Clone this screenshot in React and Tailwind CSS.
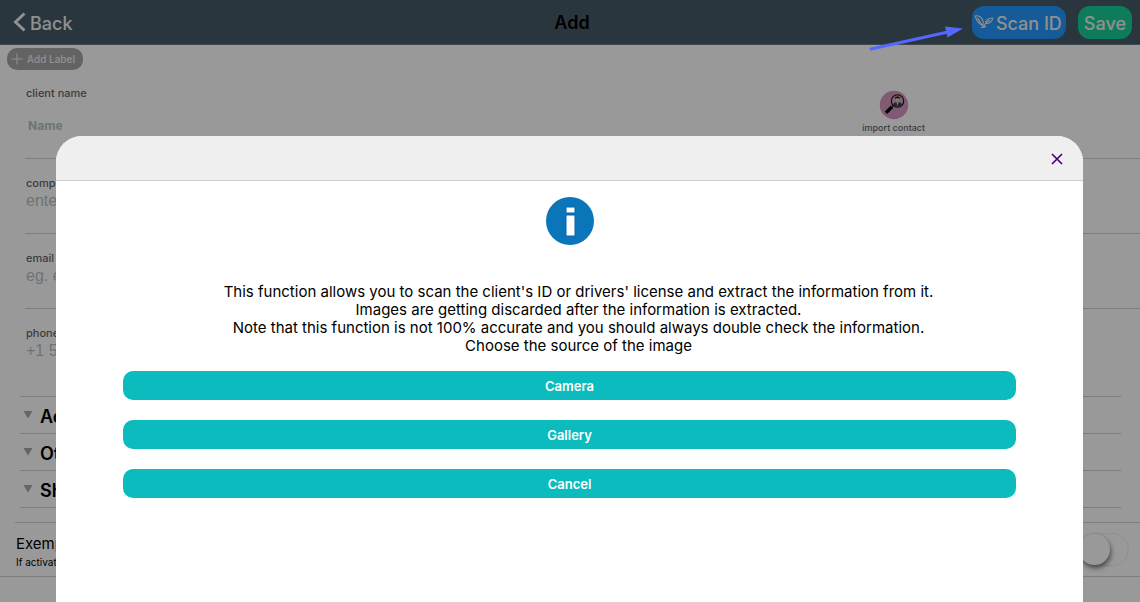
import React from "react";

const SOURCES = ["Camera", "Gallery", "Cancel"];

const FIELDS = [
    { id: "company", label: "company name", placeholder: "enter company name" },
    { id: "email", label: "email", placeholder: "eg. example@email.com" },
    { id: "phone", label: "phone number", placeholder: "+1 555 123 4567" },
];

const SECTIONS = ["Address", "Other", "Shipping"];

function ScanIcon() {
    return (
        <svg viewBox="0 0 20 16" className="h-4 w-5" fill="none" stroke="currentColor" strokeWidth="1.100" strokeLinejoin="round" strokeLinecap="round">
            <path d="M9 11.500C5 10 2.500 6.500 1.200 2C4.500 1 8 3.500 9 7C9.400 8.500 9.300 10 9 11.500Z" />
            <path d="M4 4.500L9.500 13.500" />
            <path d="M11.500 9.500C11 6.500 14 4 18.800 4C18.300 7.500 15 10 11.500 9.500Z" />
            <path d="M15.500 6.300C12.500 7.800 10.500 10.500 9.500 13.500L7.300 13.500M9.500 13.500L11.800 12.500" />
        </svg>
    );
}

function ImportIcon() {
    return (
        <svg viewBox="0 0 30 30" className="size-[30px]">
            <circle cx="15" cy="15" r="14.200" fill="#d896c0" />
            <path d="M7 22.800L13 16.800" stroke="#000" strokeWidth="3.400" />
            <path d="M12.800 17L14.800 15" stroke="#333" strokeWidth="1.600" />
            <circle cx="18.500" cy="11" r="6.200" fill="#c9a3c4" stroke="#111" strokeWidth="1.100" />
            <path d="M14.300 15C14.300 12.700 16.500 12.300 18.500 12.300S22.700 12.700 22.700 15L20.500 16.600H16.500Z" fill="#333c4a" />
            <path d="M17.300 12.300L18.500 16L19.700 12.300Z" fill="#b5dbee" />
            <circle cx="18.500" cy="9.700" r="2.300" fill="#f3c9a0" />
            <path d="M16 9.200C15.700 7 17 6.400 18.500 6.400S21.300 7 21 9.200L20.200 8.300H16.800Z" fill="#111" />
        </svg>
    );
}

function InfoIcon() {
    return (
        <svg viewBox="0 0 48 48" className="size-12">
            <circle cx="24" cy="24" r="24" fill="#0a76b9" />
            <path d="M20 10h9v6h-9zM20 18h9v21h-9z" fill="#fff" stroke="#0565ad" strokeWidth="1" />
        </svg>
    );
}

function Header() {
    return (
        <header className="grid h-[45px] grid-cols-[1fr_auto_1fr] items-center border-b border-[#6b7780] bg-[#465a68] text-lg">
            <button className="ml-3 flex items-center gap-1 justify-self-start font-medium text-[#f0f0f0]">
                <svg viewBox="0 0 14 20" className="h-5 w-3.5" fill="none" stroke="currentColor" strokeWidth="3">
                    <path d="M12.500 1.500L3.500 10L12.500 18.500" />
                </svg>
                <span className="pt-[3px]">Back</span>
            </button>
            <h1 className="pt-0.5 pl-1 font-semibold text-black">Add</h1>
            <div className="mr-2 flex gap-3 justify-self-end text-[#f0f0f0]">
                <button className="flex h-[33px] items-center gap-0.5 rounded-xl bg-[#2496ff] pr-1 pl-0.5 font-medium">
                    <ScanIcon />
                    <span className="pt-[3px]">Scan ID</span>
                </button>
                <button className="h-[33px] rounded-xl bg-[#18cf98] px-1.5 pt-[3px] font-medium">Save</button>
            </div>
        </header>
    );
}

function ClientForm() {
    return (
        <main>
            <button className="mt-[3px] ml-[7px] flex h-[22px] items-center gap-1 rounded-[10px] bg-[#a6a6a6] pr-2 pl-1 text-[10px] font-medium text-[#f0f0f0]">
                <svg viewBox="0 0 12 12" className="size-3" stroke="currentColor" strokeWidth="1">
                    <path d="M6 .5V11.500M.5 6H11.500" />
                </svg>
                Add Label
            </button>

            <div className="ml-[25px] flex h-[89px] border-b border-[#d0d0d0]">
                <div className="flex-1 pt-[15px] pl-px">
                    <label htmlFor="name" className="block text-[11px] leading-4 font-medium text-[#666]">client name</label>
                    <input
                        id="name"
                        placeholder="Name"
                        className="mt-1 h-10 w-full px-0.5 font-[Roboto] text-[13px] font-bold placeholder:text-[#b4c3c3]"
                    />
                </div>
                <button className="flex w-[44%] flex-col items-center pt-5 pr-0.5 text-[9px] leading-4 font-medium text-[#666]">
                    <ImportIcon />
                    import contact
                </button>
            </div>

            <div className="ml-[25px] divide-y divide-[#d0d0d0]">
                {FIELDS.map((f) => (
                    <div key={f.id} className="h-[75px] pt-4 pl-px">
                        <label htmlFor={f.id} className="block text-[11px] leading-4 font-medium text-[#666]">{f.label}</label>
                        <input
                            id={f.id}
                            placeholder={f.placeholder}
                            className="block h-5 w-full font-['Liberation_Sans'] text-base placeholder:text-[#b4c3c3]"
                        />
                    </div>
                ))}
            </div>

            <section className="mt-3 mr-[19px] ml-5 border-t border-[#d0d0d0]">
                {SECTIONS.map((title) => (
                    <button
                        key={title}
                        className="flex h-[37px] w-full items-center gap-1.5 border-b border-[#d0d0d0] pt-1 text-lg font-semibold"
                    >
                        <svg viewBox="0 0 14 14" className="size-3.5" fill="#a8a8a8">
                            <path d="M3.500 1H12.500L8 8.500Z" />
                        </svg>
                        {title}
                    </button>
                ))}
            </section>

            <div className="mt-3.5 ml-[15px] border-t border-[#d0d0d0]" />
            <div className="flex h-[54px] items-center justify-between border-b border-[#d0d0d0] pr-[11px] pl-4">
                <label htmlFor="exempt" className="pt-1 text-[15px] leading-5">
                    Exempt from tax
                    <span className="block text-[10px] leading-4">If activated, tax is not added</span>
                </label>
                <input
                    id="exempt"
                    type="checkbox"
                    className="h-[33px] w-[51px] appearance-none rounded-full border border-[#eee] before:block before:size-[31px] before:rounded-full before:bg-white before:shadow-[1px_3px_5px_#0008]"
                />
            </div>
        </main>
    );
}

function ScanDialog() {
    return (
        <div className="fixed inset-0 flex justify-center bg-black/40 pt-[136px] pr-px">
            <div role="dialog" aria-label="Scan ID" className="flex w-[90.2%] flex-col overflow-hidden rounded-t-[26px] bg-white">
                <div className="flex h-[45px] items-center justify-end border-b border-[#ccc] bg-[#efefef] pt-0.5 pr-5">
                    <button aria-label="Close" className="text-[#4b0082]">
                        <svg viewBox="0 0 12 12" className="size-3" stroke="currentColor" strokeWidth="1.700">
                            <path d="M1 1L11 11M11 1L1 11" />
                        </svg>
                    </button>
                </div>
                <div className="flex flex-col items-center pt-4">
                    <InfoIcon />
                    <p className="mt-[38px] pl-[18px] text-center text-[15px] leading-[18px]">
                        This function allows you to scan the client's ID or drivers' license and extract the information from it.
                        <br />
                        Images are getting discarded after the information is extracted.
                        <br />
                        Note that this function is not 100% accurate and you should always double check the information.
                        <br />
                        Choose the source of the image
                    </p>
                    <div className="mt-4 flex w-[87%] flex-col gap-5">
                        {SOURCES.map((s) => (
                            <button key={s} className="h-[29px] rounded-[10px] bg-[#0cbbbd] pt-0.5 text-[13px] font-semibold text-white">
                                {s}
                            </button>
                        ))}
                    </div>
                </div>
            </div>
        </div>
    );
}

export default function App() {
    return (
        <div className="h-screen overflow-hidden bg-white font-[Inter,sans-serif] text-black">
            <Header />
            <ClientForm />
            <ScanDialog />

            {/* pointer to the scan button, drawn over the dimmed page */}
            <svg viewBox="0 0 96 28" className="fixed top-6 right-[176px] h-7 w-24" fill="#5468ff" stroke="#5468ff">
                <path d="M3 25L80 8" strokeWidth="3" strokeLinecap="round" />
                <path d="M77 2.500L95 4.500L79.500 13.500Z" stroke="none" />
            </svg>
        </div>
    );
}
